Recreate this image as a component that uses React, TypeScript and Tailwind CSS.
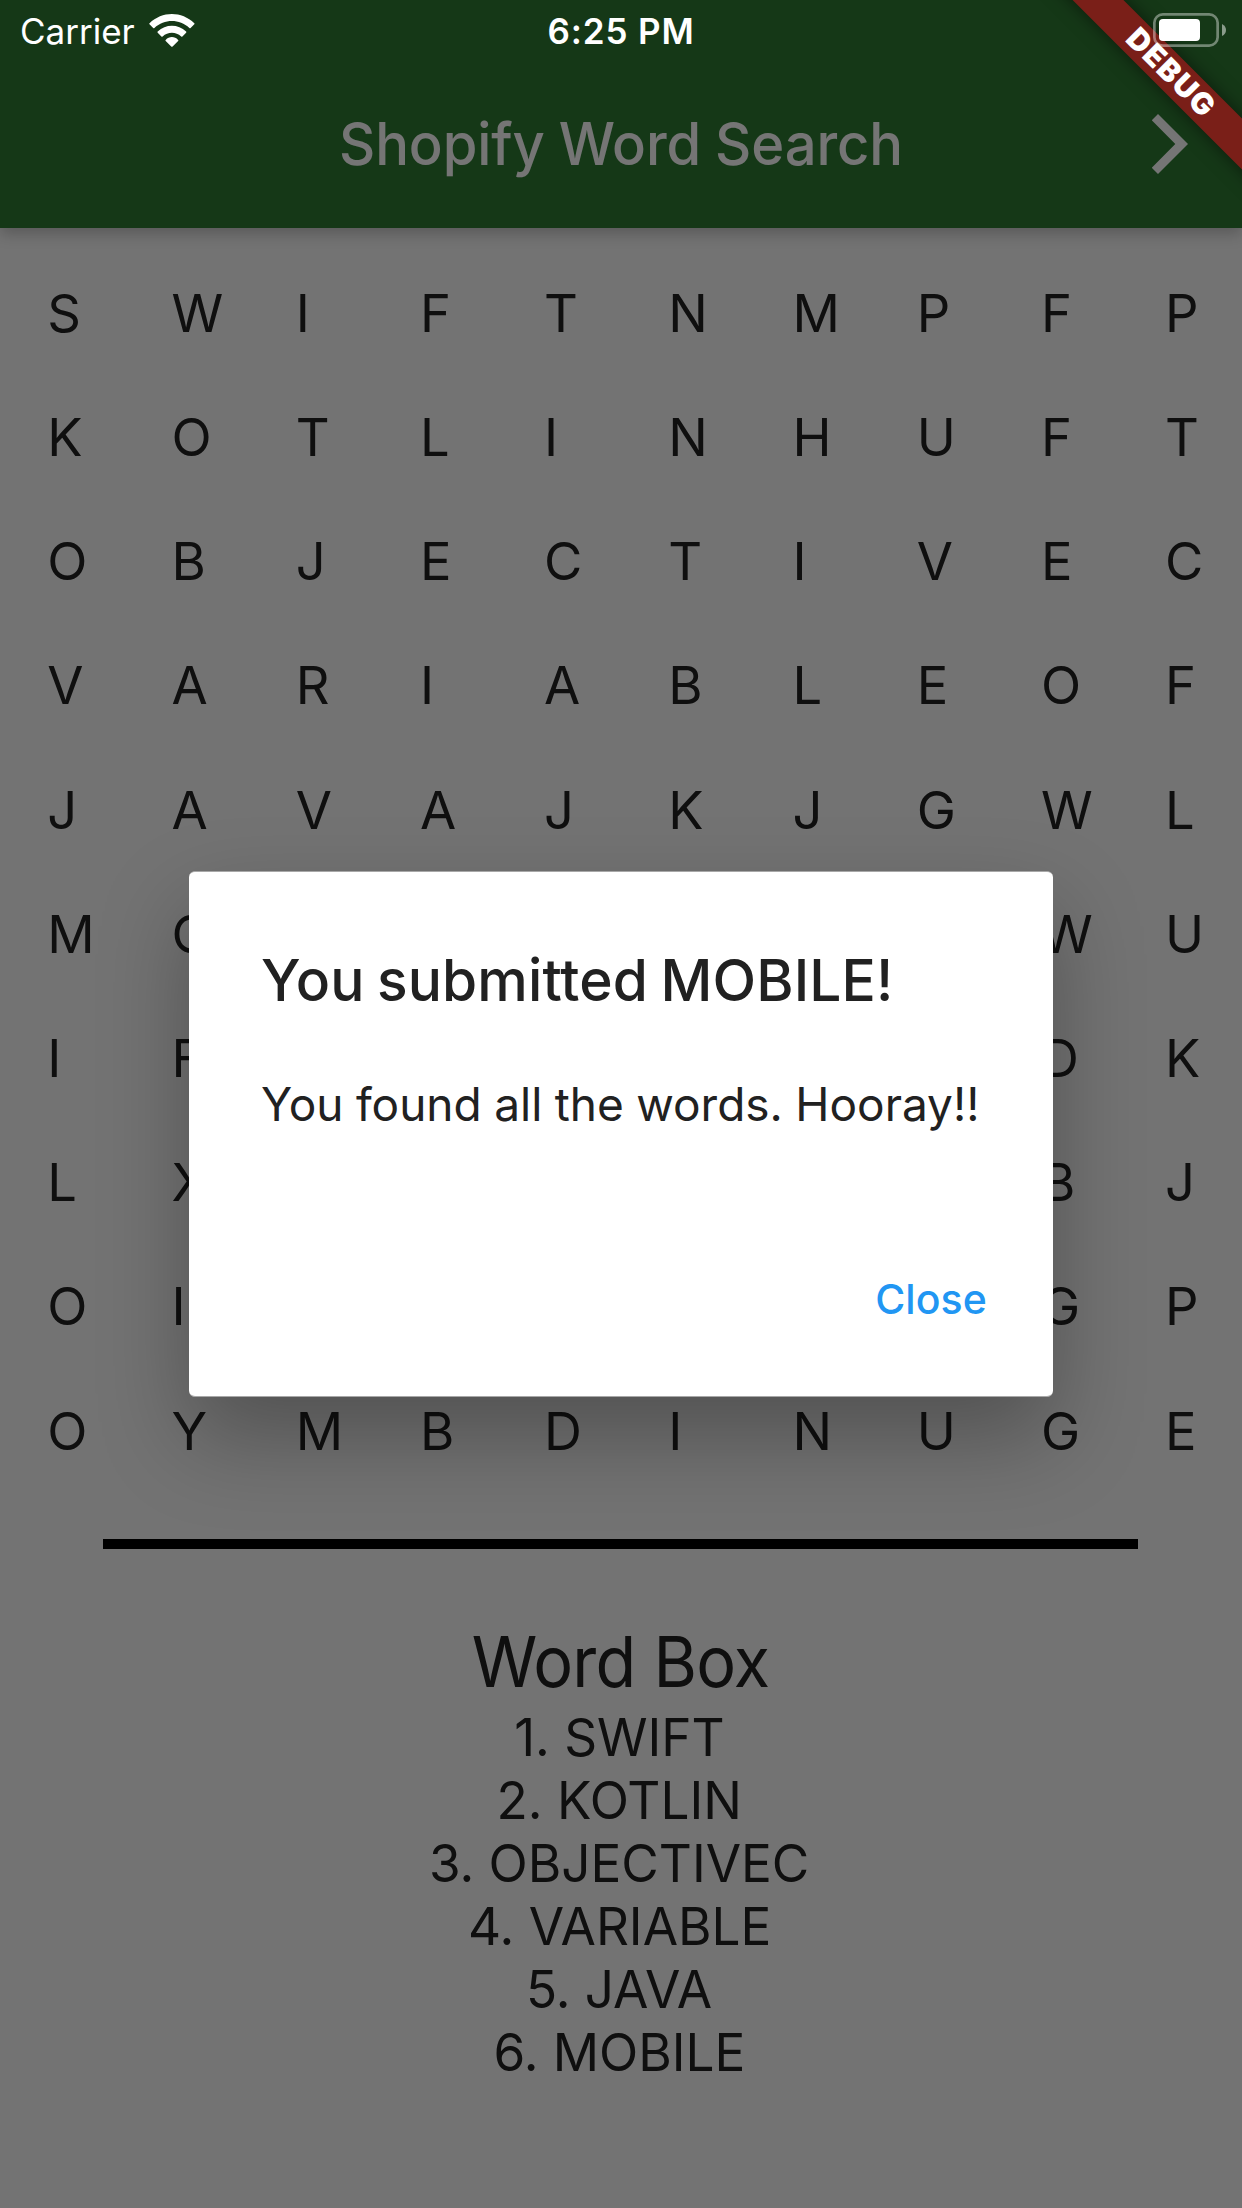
const LETTERS = [
  "SWIFTNMPFP",
  "KOTLINHUFT",
  "OBJECTIVEC",
  "VARIABLEOF",
  "JAVAJKJGWL",
  "MO      WU",
  "IF      DK",
  "LX      BJ",
  "OI      GP",
  "OYMBDINUGE",
];

const WORDS = ["SWIFT", "KOTLIN", "OBJECTIVEC", "VARIABLE", "JAVA", "MOBILE"];

function AppBar() {
  return (
    <header className="relative flex h-[228px] items-end bg-[#2f7a34] shadow-[0_6px_14px_rgba(0,0,0,0.22)]">
      <div className="grid h-[168px] w-full grid-cols-[200px_1fr_200px] items-center">
        <span />
        <h1 className="mt-[-1px] origin-center scale-x-[0.96] whitespace-nowrap text-center text-[58.5px] leading-[70px] font-medium tracking-[-0.1px] [word-spacing:-1px] text-white">
          Shopify Word Search
        </h1>
        <button className="mr-[54px] justify-self-end" aria-label="Next">
          <svg className="block h-[60px] w-9" viewBox="0 0 36 60" fill="#fff">
            <path d="M6 0L36 30L6 60L-0.3 53.7L23.3 30L-0.3 6.3Z" />
          </svg>
        </button>
      </div>
    </header>
  );
}

function LetterGrid() {
  return (
    <div className="mt-[23px] grid grid-cols-10 auto-rows-[124.2px]">
      {LETTERS.flatMap((row, r) =>
        row.split("").map((letter, c) => (
          <div key={`${r}-${c}`} className="flex items-center pl-[47.3px] text-[52.5px] leading-none">
            {letter.trim()}
          </div>
        )),
      )}
    </div>
  );
}

function WordBox() {
  return (
    <section className="mt-[71px] flex flex-col items-center">
      <h2 className="scale-x-[0.95] text-[70px] leading-[84px] tracking-[-0.8px]">Word Box</h2>
      <ol className="mt-[2px] mr-[3px] flex flex-col items-center">
        {WORDS.map((word, i) => (
          <li key={word} className="scale-x-[0.98] text-[52.3px] leading-[63px]">
            {i + 1}. {word}
          </li>
        ))}
      </ol>
    </section>
  );
}

function ResultDialog() {
  return (
    <div className="absolute inset-0 flex items-start justify-center bg-black/54 pt-[871px]">
      <div
        role="dialog"
        className="flex h-[526px] w-[864px] flex-col rounded-[6px] border-y border-[#a8a8a8] bg-white pt-[73px] pr-[66px] pl-[72px] text-[#212121] shadow-[0_40px_90px_rgba(0,0,0,0.29)]"
      >
        <h2 className="origin-left scale-x-[0.98] whitespace-nowrap text-[58px] leading-[70px] font-medium tracking-[0.15px] [word-spacing:-3px]">
          You submitted MOBILE!
        </h2>
        <p className="mt-[61px] whitespace-nowrap text-[46px] leading-[56px] tracking-[0px] [word-spacing:-0.5px]">
          You found all the words. Hooray!!
        </p>
        <button className="mt-[142px] self-end text-[41px] leading-[50px] font-medium tracking-[0.1px] text-[#2196f3]">
          Close
        </button>
      </div>
    </div>
  );
}

function DebugBanner() {
  return (
    <div className="absolute top-[53.8px] left-[1000.2px] flex h-9 w-[340px] rotate-45 items-center justify-center bg-[#7a1f18] text-[30px] leading-none font-black tracking-[1.6px] text-white shadow-[0_0_18px_rgba(0,0,0,0.5)]">
      <span className="-mt-[3px] ml-[3px]">DEBUG</span>
    </div>
  );
}

function StatusBar() {
  return (
    <div className="absolute inset-x-0 top-0 grid h-[60px] grid-cols-3 items-center text-[35px] leading-[42px] text-white">
      <div className="flex items-center pl-[20px]">
        <span className="mt-[2px]">Carrier</span>
        <svg className="ml-[14px] h-[33px] w-[46px]" viewBox="0 0 46 33" fill="#fff">
          <path d="M.5 9.3C13-3.1 32.8-3.1 45.3 9.3Q45.8 9.8 45.3 10.3L41.6 13.9Q41 14.4 40.4 13.9C30.5 4.7 15.3 4.7 5.4 13.9Q4.8 14.4 4.2 13.9L.5 10.3Q0 9.8.5 9.3Z" />
          <path d="M8.7 17.6C16.6 9.8 29.2 9.8 37.1 17.6Q37.7 18.2 37.1 18.8L33.4 22.4Q32.8 22.9 32.2 22.4C26.9 17.5 18.9 17.5 13.6 22.4Q13 22.9 12.4 22.4L8.7 18.8Q8.1 18.2 8.7 17.6Z" />
          <path d="M16.7 25.9C20.1 22.1 25.7 22.1 29.1 25.9Q29.7 26.5 29.1 27.1L23.6 32.5Q22.9 33.1 22.2 32.5L16.7 27.1Q16.1 26.5 16.7 25.9Z" />
        </svg>
      </div>
      <span className="mt-[2px] text-center font-semibold tracking-[0.87px]">6:25 PM</span>
      <svg className="mr-4 h-[34px] w-[73px] justify-self-end" viewBox="0 0 73 34">
        <rect x="1.35" y="1.35" width="63.3" height="31.3" rx="8.5" fill="none" stroke="#fff" strokeOpacity=".4" strokeWidth="2.7" />
        <rect x="6" y="6" width="41" height="22" rx="4" fill="#fff" />
        <path d="M69 11Q73 13 73 17T69 23Z" fill="#fff" fillOpacity=".5" />
      </svg>
    </div>
  );
}

export default function App() {
  return (
    <main className="relative h-[2208px] w-[1242px] overflow-hidden bg-[#fafafa] font-['Inter',sans-serif] text-[#212121]">
      <AppBar />
      <LetterGrid />
      <div className="mt-[46px] ml-[103px] h-[10px] w-[1035px] bg-black" />
      <WordBox />
      <ResultDialog />
      <DebugBanner />
      <StatusBar />
    </main>
  );
}
